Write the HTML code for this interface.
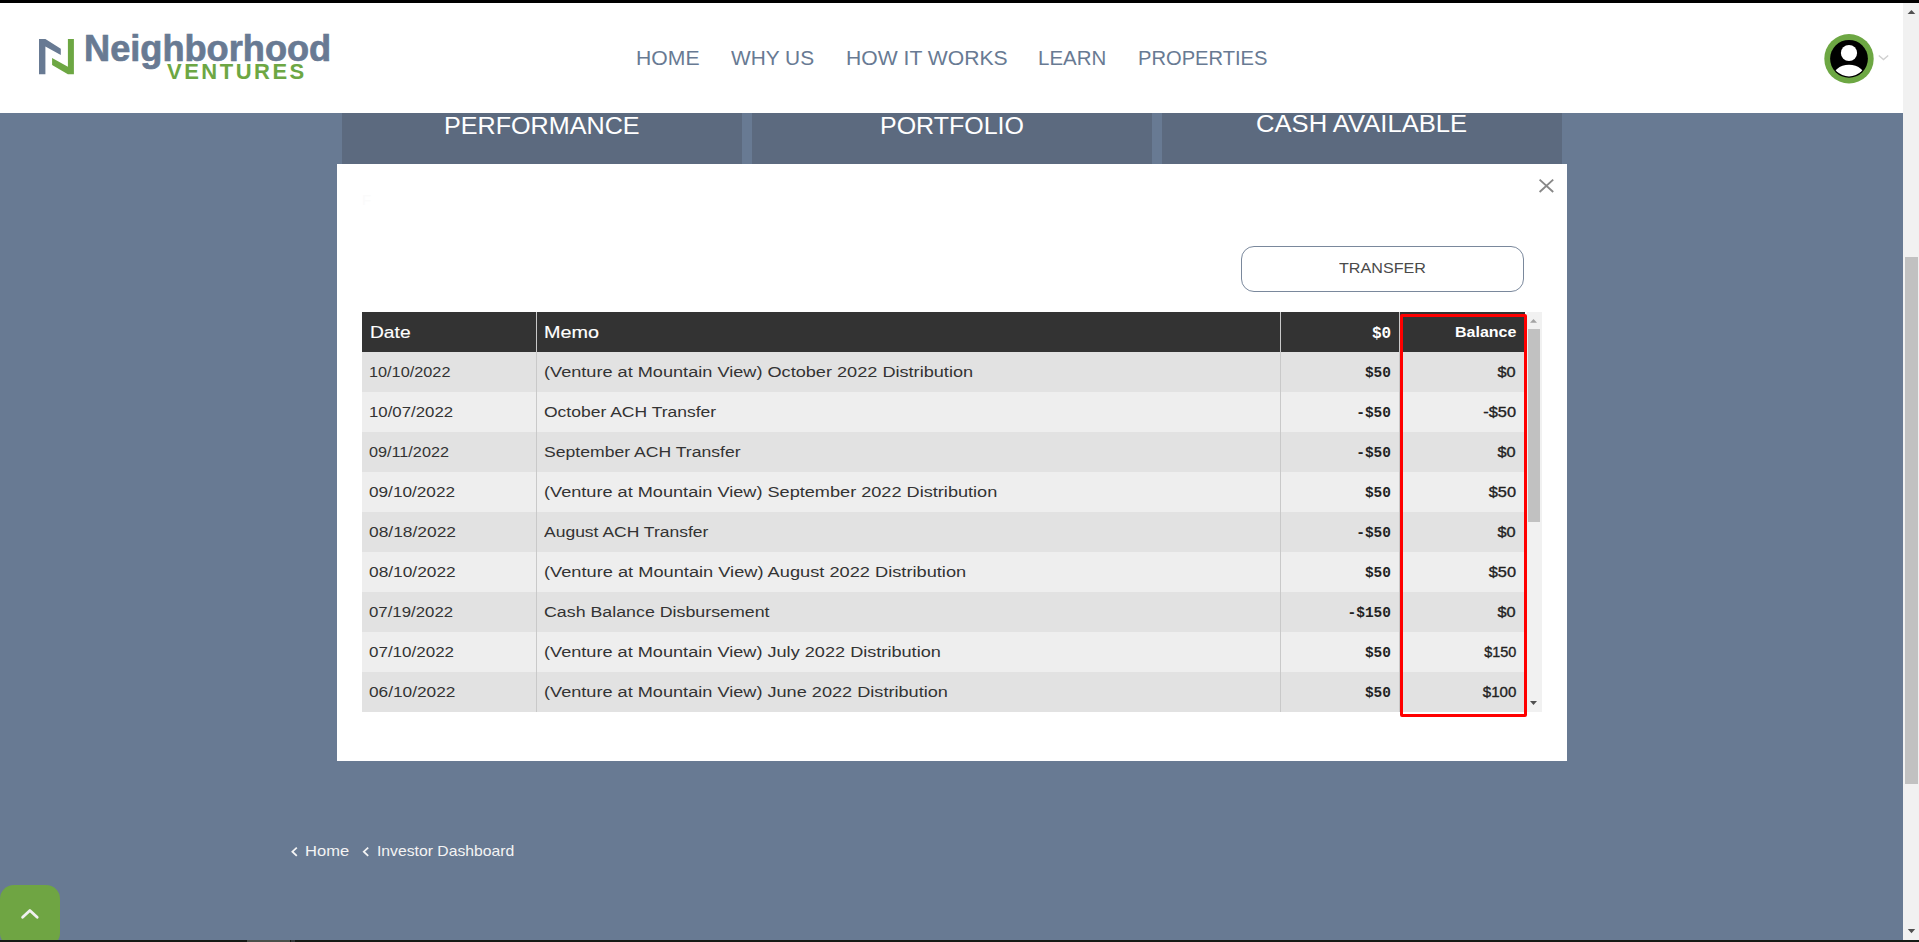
<!DOCTYPE html>
<html><head><meta charset="utf-8">
<style>
*{box-sizing:border-box;margin:0;padding:0}
html,body{width:1919px;height:942px;overflow:hidden;background:#687a93;font-family:"Liberation Sans",sans-serif}
.abs{position:absolute}
.t{position:absolute;white-space:nowrap;transform-origin:0 0;line-height:1}
#topbar{left:0;top:0;width:1919px;height:3px;background:#000}
#botbar{left:0;top:940px;width:1919px;height:2px;background:#151a15}
#botseg{left:247px;top:940px;width:43px;height:2px;background:#4a4f4a}
#header{left:0;top:3px;width:1903px;height:110px;background:#fff}
#vscroll{left:1903px;top:3px;width:16px;height:937px;background:#f1f1f1}
#vthumb{left:1905px;top:257px;width:13px;height:527px;background:#c1c1c1}
.nav{font-size:20px;color:#687a93}
.tab{top:113px;height:51px;width:400px;background:#5c6a7f}
.tabt{font-size:23.5px;color:#fff}
#modal{left:337px;top:164px;width:1230px;height:597px;background:#fff}
.row{position:absolute;left:362px;width:1163px;height:40px}
.odd{background:#e2e2e2}
.even{background:#eeeeee}
.cell{font-size:15.5px;color:#333}
.cs{transform:scaleX(1.17)}
.cd{transform:scaleX(1.05)}
.ra2{transform-origin:100% 0;transform:scaleX(1.09)}
.amt{font-family:"Liberation Mono",monospace;font-weight:bold;font-size:14.5px;color:#222}
.bal{font-size:15px;color:#222;-webkit-text-stroke:0.35px #222}
.vline{position:absolute;width:1px;background:#c9c9c9}
</style></head><body>
<div id="topbar" class="abs"></div>
<div id="header" class="abs"></div>
<svg class="abs" style="left:0;top:0" width="80" height="110">
  <polygon fill="#687a93" points="39,39 45.4,39 60.8,48.7 60.8,55 45.4,46.5 45.4,74.2 39,74.2"/>
  <polygon fill="#6da743" points="67.9,39 73.9,39 73.9,74.2 67.9,74.2 52.1,65 52.1,57.9 67.9,66.7"/>
</svg>
<div class="t" id="logotxt" style="left:84px;top:31px;font-size:36px;font-weight:bold;color:#687a93;transform:scaleX(1.005);-webkit-text-stroke:0.7px #687a93">Neighborhood</div>
<div class="t" id="ventures" style="left:167px;top:60.5px;font-size:22px;font-weight:bold;color:#6da743;letter-spacing:2.5px">VENTURES</div>
<div class="t nav" id="n1" style="left:636px;top:48px;transform:scaleX(1.059)">HOME</div>
<div class="t nav" id="n2" style="left:731px;top:48px;transform:scaleX(1.043)">WHY US</div>
<div class="t nav" id="n3" style="left:846px;top:48px;transform:scaleX(1.057)">HOW IT WORKS</div>
<div class="t nav" id="n4" style="left:1038px;top:48px;transform:scaleX(1.023)">LEARN</div>
<div class="t nav" id="n5" style="left:1138px;top:48px;transform:scaleX(1.007)">PROPERTIES</div>
<svg class="abs" style="left:1820px;top:30px" width="75" height="60" viewBox="1820 30 75 60">
  <defs><clipPath id="ic"><circle cx="1849" cy="58.8" r="17.6"/></clipPath></defs>
  <circle cx="1849" cy="58.8" r="24.7" fill="#6da743"/>
  <circle cx="1849" cy="58.8" r="18.9" fill="#000"/>
  <circle cx="1849" cy="53" r="8.1" fill="#fff"/>
  <ellipse cx="1849" cy="79" rx="17" ry="14.2" fill="#fff" clip-path="url(#ic)"/>
  <polyline points="1878.8,55.4 1883.5,59.6 1888.2,55.4" fill="none" stroke="#d0d0d0" stroke-width="1.4"/>
</svg>
<div id="vscroll" class="abs"></div>
<div id="vthumb" class="abs"></div>
<svg class="abs" style="left:1903px;top:3px" width="16" height="937">
  <polygon points="4.6,11 12.3,11 8.45,7" fill="#505050"/>
  <polygon points="4.8,926 12.2,926 8.5,930.3" fill="#505050"/>
</svg>
<div class="abs tab" style="left:342px"></div>
<div class="abs tab" style="left:752px"></div>
<div class="abs tab" style="left:1162px"></div>
<div class="t tabt" id="tb1" style="left:444px;top:115px;transform:scaleX(1.07)">PERFORMANCE</div>
<div class="t tabt" id="tb2" style="left:880px;top:115px;transform:scaleX(1.063)">PORTFOLIO</div>
<div class="t tabt" id="tb3" style="left:1256px;top:113px;transform:scaleX(1.09)">CASH AVAILABLE</div>
<div id="modal" class="abs"></div>
<div class="t" style="left:362px;top:192px;font-size:15px;color:#fbfbfb">F</div>
<svg class="abs" style="left:1530px;top:170px" width="30" height="30" viewBox="1530 170 30 30">
  <path d="M1539.6,179.6 L1553.2,192 M1553.2,179.6 L1539.6,192" stroke="#888" stroke-width="1.9" fill="none"/>
</svg>
<div class="abs" style="left:1241px;top:246px;width:283px;height:46px;border:1px solid #7a889c;border-radius:13px"></div>
<div class="t" id="transfer" style="left:1339px;top:259.9px;font-size:15px;color:#4a4a4a;transform:scaleX(1.075)">TRANSFER</div>

<!-- table -->
<div class="row" style="top:312px;height:40px;background:#333"></div>
<div class="row odd" style="top:352px"></div>
<div class="row even" style="top:392px"></div>
<div class="row odd" style="top:432px"></div>
<div class="row even" style="top:472px"></div>
<div class="row odd" style="top:512px"></div>
<div class="row even" style="top:552px"></div>
<div class="row odd" style="top:592px"></div>
<div class="row even" style="top:632px"></div>
<div class="row odd" style="top:672px"></div>
<div class="vline" style="left:536px;top:312px;height:400px"></div>
<div class="vline" style="left:1280px;top:312px;height:400px"></div>
<div class="vline" style="left:1399px;top:312px;height:400px"></div>

<div class="t" style="left:370px;top:324px;font-size:17px;color:#fff;transform:scaleX(1.13);-webkit-text-stroke:0.15px #fff">Date</div>
<div class="t" style="left:544px;top:324px;font-size:17px;color:#fff;transform:scaleX(1.165);-webkit-text-stroke:0.15px #fff">Memo</div>
<div class="t" style="left:1372px;top:325.7px;font-size:16px;color:#fff;font-family:'Liberation Mono',monospace;font-weight:bold">$0</div>
<div class="t" style="left:1455px;top:323.5px;font-size:15px;color:#fff;font-weight:bold;transform:scaleX(1.066)">Balance</div>

<!--ROWS-->
<div class="t cell" style="left:369px;top:364px;transform:scaleX(1.05)">10/10/2022</div>
<div class="t cell" style="left:544px;top:364px;transform:scaleX(1.17)">(Venture at Mountain View) October 2022 Distribution</div>
<div class="t amt" style="right:528px;top:366px">$50</div>
<div class="t bal" style="right:403px;top:364px;transform-origin:100% 0;transform:scaleX(1.09)">$0</div>
<div class="t cell" style="left:369px;top:404px;transform:scaleX(1.084)">10/07/2022</div>
<div class="t cell" style="left:544px;top:404px;transform:scaleX(1.129)">October ACH Transfer</div>
<div class="t amt" style="right:528px;top:406px">-$50</div>
<div class="t bal" style="right:403px;top:404px;transform-origin:100% 0;transform:scaleX(1.09)">-$50</div>
<div class="t cell" style="left:369px;top:444px;transform:scaleX(1.046)">09/11/2022</div>
<div class="t cell" style="left:544px;top:444px;transform:scaleX(1.135)">September ACH Transfer</div>
<div class="t amt" style="right:528px;top:446px">-$50</div>
<div class="t bal" style="right:403px;top:444px;transform-origin:100% 0;transform:scaleX(1.09)">$0</div>
<div class="t cell" style="left:369px;top:484px;transform:scaleX(1.109)">09/10/2022</div>
<div class="t cell" style="left:544px;top:484px;transform:scaleX(1.17)">(Venture at Mountain View) September 2022 Distribution</div>
<div class="t amt" style="right:528px;top:486px">$50</div>
<div class="t bal" style="right:403px;top:484px;transform-origin:100% 0;transform:scaleX(1.09)">$50</div>
<div class="t cell" style="left:369px;top:524px;transform:scaleX(1.121)">08/18/2022</div>
<div class="t cell" style="left:544px;top:524px;transform:scaleX(1.129)">August ACH Transfer</div>
<div class="t amt" style="right:528px;top:526px">-$50</div>
<div class="t bal" style="right:403px;top:524px;transform-origin:100% 0;transform:scaleX(1.09)">$0</div>
<div class="t cell" style="left:369px;top:564px;transform:scaleX(1.117)">08/10/2022</div>
<div class="t cell" style="left:544px;top:564px;transform:scaleX(1.176)">(Venture at Mountain View) August 2022 Distribution</div>
<div class="t amt" style="right:528px;top:566px">$50</div>
<div class="t bal" style="right:403px;top:564px;transform-origin:100% 0;transform:scaleX(1.09)">$50</div>
<div class="t cell" style="left:369px;top:604px;transform:scaleX(1.084)">07/19/2022</div>
<div class="t cell" style="left:544px;top:604px;transform:scaleX(1.148)">Cash Balance Disbursement</div>
<div class="t amt" style="right:528px;top:606px">-$150</div>
<div class="t bal" style="right:403px;top:604px;transform-origin:100% 0;transform:scaleX(1.09)">$0</div>
<div class="t cell" style="left:369px;top:644px;transform:scaleX(1.096)">07/10/2022</div>
<div class="t cell" style="left:544px;top:644px;transform:scaleX(1.17)">(Venture at Mountain View) July 2022 Distribution</div>
<div class="t amt" style="right:528px;top:646px">$50</div>
<div class="t bal" style="right:403px;top:644px;transform-origin:100% 0;transform:scaleX(0.964)">$150</div>
<div class="t cell" style="left:369px;top:684px;transform:scaleX(1.114)">06/10/2022</div>
<div class="t cell" style="left:544px;top:684px;transform:scaleX(1.17)">(Venture at Mountain View) June 2022 Distribution</div>
<div class="t amt" style="right:528px;top:686px">$50</div>
<div class="t bal" style="right:403px;top:684px;transform-origin:100% 0;transform:scaleX(1.007)">$100</div>
<!--/ROWS-->

<!-- inner scrollbar -->
<div class="abs" style="left:1527px;top:312px;width:15px;height:400px;background:#f1f1f1"></div>
<div class="abs" style="left:1528px;top:329px;width:12px;height:193px;background:#c1c1c1"></div>
<svg class="abs" style="left:1527px;top:312px" width="15" height="400">
  <polygon points="3,10.8 10,10.8 6.5,7" fill="#a3a3a3"/>
  <polygon points="3,389 10,389 6.5,393" fill="#505050"/>
</svg>
<!-- red box -->
<div class="abs" style="left:1400px;top:314px;width:127px;height:403px;border:3px solid #ff0000;border-radius:2px"></div>

<svg class="abs" style="left:280px;top:840px" width="100" height="22" viewBox="280 840 100 22">
  <polyline points="296.8,847.6 292.4,851.7 296.8,855.8" fill="none" stroke="#f4f4f4" stroke-width="1.8"/>
  <polyline points="368.2,847.6 363.8,851.7 368.2,855.8" fill="none" stroke="#f4f4f4" stroke-width="1.8"/>
</svg>
<div class="t" id="bcHome" style="left:305px;top:843.5px;font-size:14.5px;color:#f4f4f4;transform:scaleX(1.14)">Home</div>
<div class="t" id="bcInv" style="left:377px;top:843.5px;font-size:14.5px;color:#f4f4f4;transform:scaleX(1.085)">Investor Dashboard</div>

<div class="abs" style="left:0;top:885px;width:60px;height:62px;background:#6fa543;border-radius:14px"></div>
<svg class="abs" style="left:0;top:880px" width="60" height="60" viewBox="0 880 60 60">
  <polyline points="22.6,917.2 29.9,910.4 37.2,917.2" fill="none" stroke="#f0f0f0" stroke-width="2.8" stroke-linecap="round" stroke-linejoin="round"/>
</svg>
<div id="botbar" class="abs"></div>
<div id="botseg" class="abs"></div>
<div class="abs" style="left:291px;top:940px;width:4px;height:2px;background:#33383a"></div>
</body></html>
